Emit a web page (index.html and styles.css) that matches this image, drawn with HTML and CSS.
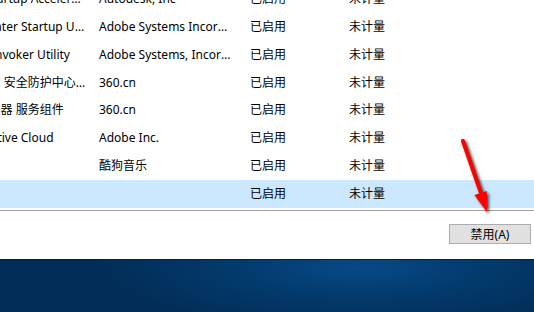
FILE: index.html
```html
<!DOCTYPE html>
<html lang="zh-CN">

<head>
	<meta charset="UTF-8">
	<title>启动</title>
	<link rel="stylesheet" href="styles.css">
</head>

<body>
	<div class="window">
		<div class="list">
			<table class="startupTable">
				<colgroup>
					<col class="colName">
					<col class="colPublisher">
					<col class="colStatus">
					<col class="colImpact">
				</colgroup>
				<tr><td>AutoCAD Startup Accelerator</td><td>Autodesk, Inc</td><td>已启用</td><td>未计量</td></tr>
				<tr><td>Adobe Updater Startup Utility</td><td>Adobe Systems Incorporated</td><td>已启用</td><td>未计量</td></tr>
				<tr><td>Adobe GC Invoker Utility</td><td>Adobe Systems, Incorporated</td><td>已启用</td><td>未计量</td></tr>
				<tr><td>360安全卫士 安全防护中心模块</td><td>360.cn</td><td>已启用</td><td>未计量</td></tr>
				<tr><td>360安全浏览器 服务组件</td><td>360.cn</td><td>已启用</td><td>未计量</td></tr>
				<tr><td>Adobe Creative Cloud</td><td>Adobe Inc.</td><td>已启用</td><td>未计量</td></tr>
				<tr><td></td><td>酷狗音乐</td><td>已启用</td><td>未计量</td></tr>
				<tr class="selected"><td></td><td></td><td>已启用</td><td>未计量</td></tr>
			</table>
		</div>
		<div class="footer">
			<button class="disableBtn">禁用(A)</button>
		</div>
	</div>
	<div class="desktop"></div>

	<!-- annotation arrow drawn over the dialog -->
	<svg class="arrow" width="534" height="312" viewBox="0 0 534 312">
		<g class="arrowShape">
			<line x1="463" y1="141" x2="481" y2="193" stroke="#ff0000" stroke-width="4" stroke-linecap="round"/>
			<polygon points="487,212 474.4,195.1 486.8,190.9" fill="#ff0000"/>
		</g>
	</svg>
</body>

</html>
```

FILE: styles.css
```css
body {
    margin: 0;
    background-color: white;
    font-family: "Noto Sans", "Noto Sans CJK SC", sans-serif;
    font-size: 12px;
    color: black;
    width: 534px;
    height: 312px;
    overflow: hidden;
}
.window {
    background-color: white;
}
.list {
    height: 210px;
    overflow: hidden;
}
.startupTable {
    border-collapse: collapse;
    table-layout: fixed;
    width: 679px;
    margin-top: -14.6px;
    margin-left: -75px;
}
.colName { width: 168px; }
.colPublisher { width: 151px; }
.colStatus { width: 99px; }
.colImpact { width: 261px; }
.startupTable td {
    height: 27.8px;
    padding: 0 10px 0 6px;
    white-space: nowrap;
    overflow: hidden;
    text-overflow: ellipsis;
    line-height: 16px;
}
.startupTable td:first-child {
    padding-left: 7px;
    padding-right: 6px;
}
.startupTable tr.selected td {
    background-color: #cce8ff;
}
.footer {
    border-top: 1px solid #a0a0a0;
    display: flex;
    justify-content: flex-end;
    align-items: flex-start;
    padding: 13px 3px 0 0;
    height: 35px;
}
.disableBtn {
    width: 82px;
    height: 20px;
    background-color: #e1e1e1;
    border: 1px solid #adadad;
    font-family: inherit;
    font-size: 12px;
    padding: 0;
    color: black;
}
.desktop {
    height: 53px;
    border-top: 1px solid #0d1f33;
    box-sizing: border-box;
    background: radial-gradient(ellipse 260px 60px at 360px 8px, #074a86 0%, #033b6e 45%, #022d58 100%);
}
.arrow {
    position: absolute;
    left: 0;
    top: 0;
    pointer-events: none;
}
.arrowShape {
    filter: drop-shadow(2px 2px 1.5px rgba(0, 0, 0, 0.7));
}
```
